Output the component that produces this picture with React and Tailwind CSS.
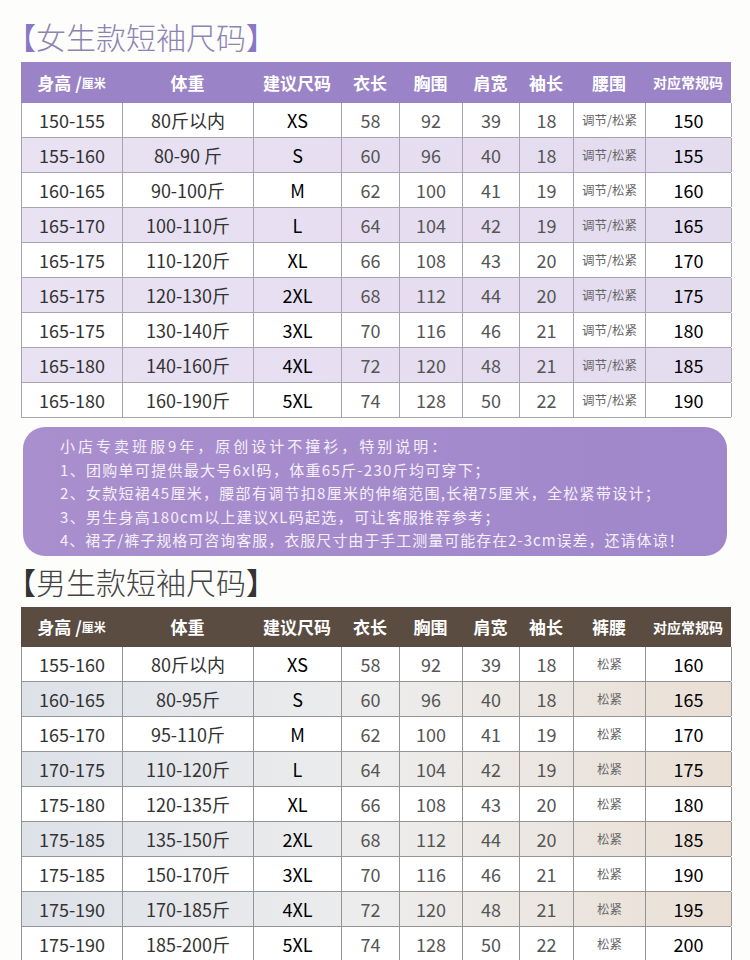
import React from 'react'

const cols = 'grid grid-cols-[101px_131px_88px_58px_63px_57px_54px_72px_86px]'

const women = [
    ['150-155', '80斤以内', 'XS', '58', '92', '39', '18', '150'],
    ['155-160', '80-90 斤', 'S', '60', '96', '40', '18', '155'],
    ['160-165', '90-100斤', 'M', '62', '100', '41', '19', '160'],
    ['165-170', '100-110斤', 'L', '64', '104', '42', '19', '165'],
    ['165-175', '110-120斤', 'XL', '66', '108', '43', '20', '170'],
    ['165-175', '120-130斤', '2XL', '68', '112', '44', '20', '175'],
    ['165-175', '130-140斤', '3XL', '70', '116', '46', '21', '180'],
    ['165-180', '140-160斤', '4XL', '72', '120', '48', '21', '185'],
    ['165-180', '160-190斤', '5XL', '74', '128', '50', '22', '190'],
]

const men = [
    ['155-160', '80斤以内', 'XS', '58', '92', '39', '18', '160'],
    ['160-165', '80-95斤', 'S', '60', '96', '40', '18', '165'],
    ['165-170', '95-110斤', 'M', '62', '100', '41', '19', '170'],
    ['170-175', '110-120斤', 'L', '64', '104', '42', '19', '175'],
    ['175-180', '120-135斤', 'XL', '66', '108', '43', '20', '180'],
    ['175-185', '135-150斤', '2XL', '68', '112', '44', '20', '185'],
    ['175-185', '150-170斤', '3XL', '70', '116', '46', '21', '190'],
    ['175-190', '170-185斤', '4XL', '72', '120', '48', '21', '195'],
    ['175-190', '185-200斤', '5XL', '74', '128', '50', '22', '200'],
]

function Title({ text, bracket, color }) {
    return (
        <div className={`text-[30px] leading-[36px] ml-[6px] font-light ${color}`}>
            <span className={`font-normal ${bracket}`}>【</span>
            {text}
            <span className={`font-normal ${bracket}`}>】</span>
        </div>
    )
}

function SizeTable({ rows, headBg, headH, waistLabel, waistText, stripe, line }) {
    const head = ['体重', '建议尺码', '衣长', '胸围', '肩宽', '袖长', waistLabel]
    return (
        <div className="mx-[21px] w-[710px]">
            <div className={`${cols} ${headH} ${headBg} text-white font-bold text-[17px]`}>
                <div className="flex items-center justify-center">
                    身高<span className="ml-1">/</span>
                    <span className="text-[12px]">厘米</span>
                </div>
                {head.map((h) => (
                    <div key={h} className="flex items-center justify-center">
                        {h}
                    </div>
                ))}
                <div className="flex items-center justify-center text-[14px]">对应常规码</div>
            </div>
            {rows.map((r, i) => (
                <div
                    key={i}
                    className={`${cols} h-[35px] border-b border-l ${line} ${i % 2 === 1 ? stripe : 'bg-white'}`}
                >
                    {r.slice(0, 7).map((c, j) => (
                        <div
                            key={j}
                            className={`flex items-center justify-center border-r ${line} text-[18px] ${
                                j === 2 ? 'text-black' : j > 2 ? 'text-[#555]' : 'text-[#333]'
                            }`}
                        >
                            {c}
                        </div>
                    ))}
                    <div className={`flex items-center justify-center border-r ${line} text-[12.5px] text-[#666]`}>
                        {waistText}
                    </div>
                    <div className={`flex items-center justify-center border-r ${line} text-[18px] text-black`}>
                        {r[7]}
                    </div>
                </div>
            ))}
        </div>
    )
}

export default function App() {
    return (
        <div className="w-[750px] h-[960px] overflow-hidden bg-[#fdfdfc] pt-[18px] font-['Noto_Sans_CJK_SC','Noto_Sans',sans-serif]">
            <Title text="女生款短袖尺码" bracket="text-[#8a76c6]" color="text-[#8d84b2]" />
            <div className="mt-[8px]">
                <SizeTable
                    rows={women}
                    headBg="bg-[#9a83c6]"
                    headH="h-[41px]"
                    waistLabel="腰围"
                    waistText="调节/松紧"
                    stripe="bg-linear-to-r from-[#e9e2f3] to-[#e3dbee]"
                    line="border-[#a9a3b1]"
                />
            </div>
            <div className="mx-[23px] mt-[9px] h-[129px] rounded-[22px] bg-linear-to-r from-[#a98fcd] to-[#a087cb] pl-[37px] pt-[7px] text-[15px] leading-[23.5px] text-[#f5effb] tracking-[1.3px]">
                <div className="tracking-[3px]">小店专卖班服9年，原创设计不撞衫，特别说明：</div>
                <div>1、团购单可提供最大号6xl码，体重65斤-230斤均可穿下；</div>
                <div>2、女款短裙45厘米，腰部有调节扣8厘米的伸缩范围,长裙75厘米，全松紧带设计；</div>
                <div>3、男生身高180cm以上建议XL码起选，可让客服推荐参考；</div>
                <div className="tracking-[1px]">4、裙子/裤子规格可咨询客服，衣服尺寸由于手工测量可能存在2-3cm误差，还请体谅！</div>
            </div>
            <div className="mt-[7px]">
                <Title text="男生款短袖尺码" bracket="text-[#333]" color="text-[#444]" />
            </div>
            <div className="mt-[8px]">
                <SizeTable
                    rows={men}
                    headBg="bg-[#5b4c41]"
                    headH="h-[40px]"
                    waistLabel="裤腰"
                    waistText="松紧"
                    stripe="bg-linear-to-r from-[#dde1e8] via-[#ededed] to-[#eadfd4]"
                    line="border-[#949494]"
                />
            </div>
        </div>
    )
}
